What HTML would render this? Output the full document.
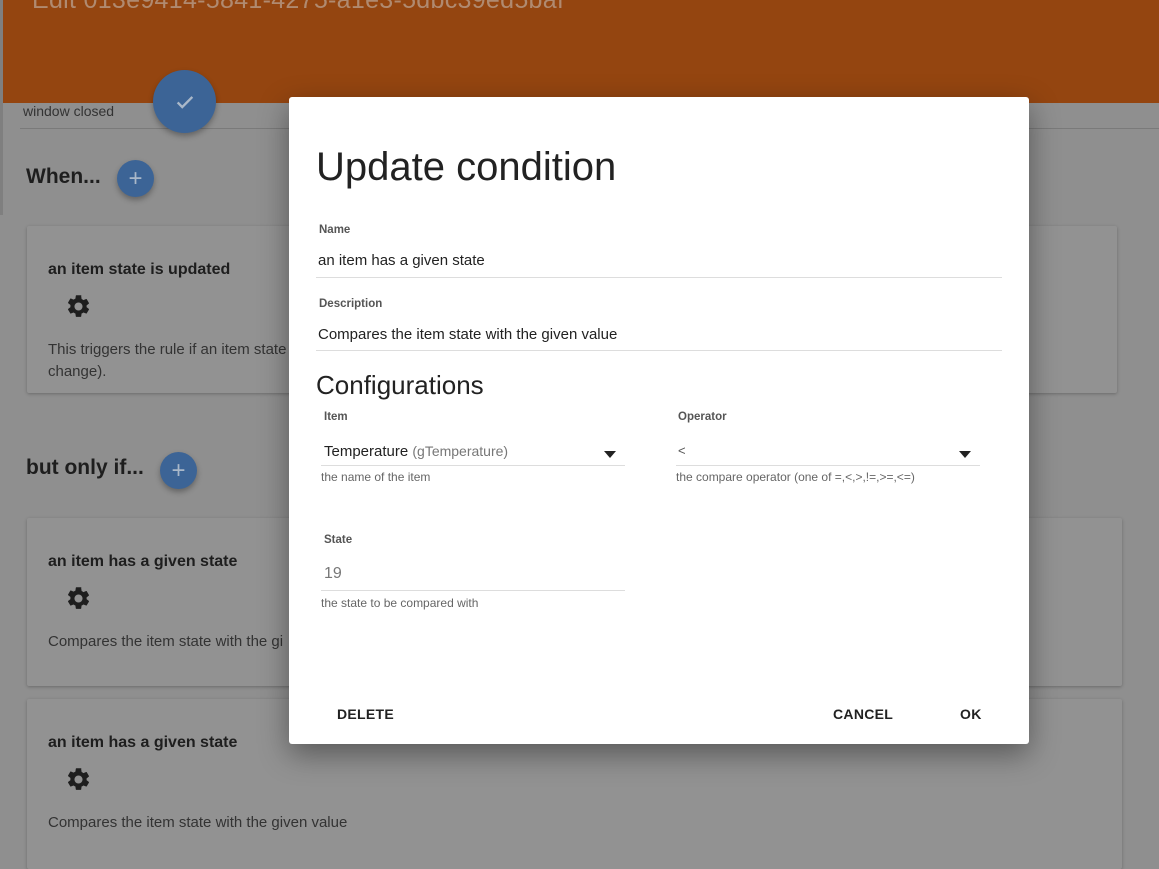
<!DOCTYPE html>
<html><head><meta charset="utf-8"><style>
*{box-sizing:border-box;margin:0;padding:0}
body{width:1159px;height:858px;overflow:hidden;background:#8f8f8f;font-family:"Liberation Sans",sans-serif;position:relative;color:#1a1a1a}
.hdr{position:absolute;left:3px;top:0;width:1156px;height:103px;background:#944510}
.hdr h1{position:absolute;left:29px;top:-14px;font-weight:300;font-size:25px;color:#b08a70;letter-spacing:.3px}
.strip{position:absolute;left:0;top:0;width:3px;height:215px;background:#7f7f7f}
.wc{position:absolute;left:23px;top:103px;font-size:14px;color:#333}
.line{position:absolute;left:20px;top:128px;width:1139px;height:1px;background:#7a7a7a}
.fab{position:absolute;border-radius:50%;background:#3c6496;box-shadow:0 3px 6px rgba(0,0,0,.3);color:#aab8c9;display:flex;align-items:center;justify-content:center}
.h2{position:absolute;font-size:21px;font-weight:bold;color:#1e1e1e}
.card{position:absolute;background:#929292;box-shadow:0 1px 3px rgba(0,0,0,.25);border-radius:2px}
.card .t{position:absolute;left:21px;top:35px;font-size:16px;color:#1e1e1e;font-weight:bold}
.card .g{position:absolute;left:38px;top:67px}
.card .d{position:absolute;left:21px;top:113px;font-size:15px;color:#333;line-height:22px}
.dlg{position:absolute;left:289px;top:97px;width:740px;height:647px;background:#fff;border-radius:3px;box-shadow:0 10px 30px rgba(0,0,0,.4)}
.dlg .ttl{position:absolute;left:27px;top:48px;font-size:40px;font-weight:300;color:#222}
.lbl{position:absolute;font-size:11.5px;font-weight:bold;color:#555}
.val{position:absolute;font-size:15px;color:#222}
.ul{position:absolute;height:1px;background:#ddd}
.hint{position:absolute;font-size:12px;color:#666}
.arr{position:absolute;width:0;height:0;border-left:6px solid transparent;border-right:6px solid transparent;border-top:7px solid #222}
.btn{position:absolute;top:609px;font-size:14px;font-weight:bold;color:#222;letter-spacing:.3px}
</style></head><body>
<div class="hdr"><h1>Edit 013e9414-5841-4275-a1e3-5dbc39ed5baf</h1></div>
<div class="strip"></div>
<div class="wc">window closed</div>
<div class="line"></div>
<div class="fab" style="left:153px;top:70px;width:63px;height:63px"><svg width="22" height="22" viewBox="0 0 24 24"><path d="M4 12.5l5 5L20 6.5" fill="none" stroke="#aab8c9" stroke-width="2.6"/></svg></div>
<div class="h2" style="left:26px;top:165px">When...</div>
<div class="fab" style="left:117px;top:160px;width:37px;height:37px;font-size:24px;font-weight:300">+</div>
<div class="h2" style="left:26px;top:456px">but only if...</div>
<div class="fab" style="left:160px;top:452px;width:37px;height:37px;font-size:24px;font-weight:300">+</div>

<div class="card" style="left:27px;top:226px;width:1090px;height:167px"><div class="t">an item state is updated</div><div class="g"><svg width="27" height="27" viewBox="0 0 24 24"><path fill="#1e1e1e" d="M19.14 12.94c.04-.3.06-.61.06-.94s-.02-.64-.07-.94l2.03-1.58a.49.49 0 0 0 .12-.61l-1.92-3.32a.49.49 0 0 0-.59-.22l-2.39.96c-.5-.38-1.03-.7-1.62-.94l-.36-2.54A.48.48 0 0 0 13.920 2h-3.84c-.24 0-.43.17-.47.41l-.36 2.54c-.59.24-1.13.57-1.62.94l-2.39-.96a.48.48 0 0 0-.59.22L2.74 8.47c-.12.21-.08.47.12.61l2.03 1.58c-.05.3-.09.63-.09.94s.02.64.07.94l-2.03 1.58a.49.49 0 0 0-.12.61l1.92 3.32c.12.22.37.29.59.22l2.39-.96c.5.38 1.03.7 1.62.94l.36 2.54c.05.24.24.41.48.41h3.84c.24 0 .44-.17.47-.41l.36-2.54c.59-.24 1.13-.56 1.62-.94l2.39.96c.22.08.47 0 .59-.22l1.92-3.32c.12-.22.07-.47-.12-.61l-2.01-1.58zM12 15.6A3.6 3.6 0 1 1 12 8.4a3.6 3.6 0 0 1 0 7.2z"/></svg></div><div class="d">This triggers the rule if an item state<br>change).</div></div>
<div class="card" style="left:27px;top:518px;width:1095px;height:168px"><div class="t">an item has a given state</div><div class="g"><svg width="27" height="27" viewBox="0 0 24 24"><path fill="#1e1e1e" d="M19.14 12.94c.04-.3.06-.61.06-.94s-.02-.64-.07-.94l2.03-1.58a.49.49 0 0 0 .12-.61l-1.92-3.32a.49.49 0 0 0-.59-.22l-2.39.96c-.5-.38-1.03-.7-1.62-.94l-.36-2.54A.48.48 0 0 0 13.92 2h-3.84c-.24 0-.43.17-.47.41l-.36 2.54c-.59.24-1.13.57-1.62.94l-2.39-.96a.48.48 0 0 0-.59.22L2.74 8.47c-.12.21-.08.47.12.61l2.03 1.58c-.05.3-.09.63-.09.94s.02.64.07.94l-2.03 1.58a.49.49 0 0 0-.12.61l1.92 3.32c.12.22.37.29.59.22l2.39-.96c.5.38 1.03.7 1.62.94l.36 2.54c.05.24.24.41.48.41h3.84c.24 0 .44-.17.47-.41l.36-2.54c.59-.24 1.13-.56 1.62-.94l2.39.96c.22.08.47 0 .59-.22l1.92-3.32c.12-.22.07-.47-.12-.61l-2.01-1.58zM12 15.6A3.6 3.6 0 1 1 12 8.4a3.6 3.6 0 0 1 0 7.2z"/></svg></div><div class="d">Compares the item state with the gi</div></div>
<div class="card" style="left:27px;top:699px;width:1095px;height:170px"><div class="t">an item has a given state</div><div class="g"><svg width="27" height="27" viewBox="0 0 24 24"><path fill="#1e1e1e" d="M19.14 12.94c.04-.3.06-.61.06-.94s-.02-.64-.07-.94l2.03-1.58a.49.49 0 0 0 .12-.61l-1.92-3.32a.49.49 0 0 0-.59-.22l-2.39.96c-.5-.38-1.03-.7-1.62-.94l-.36-2.54A.48.48 0 0 0 13.92 2h-3.84c-.24 0-.43.17-.47.41l-.36 2.54c-.59.24-1.13.57-1.62.94l-2.39-.96a.48.48 0 0 0-.59.22L2.74 8.47c-.12.21-.08.47.12.61l2.03 1.58c-.05.3-.09.63-.09.94s.02.64.07.94l-2.03 1.58a.49.49 0 0 0-.12.61l1.92 3.32c.12.22.37.29.59.22l2.39-.96c.5.38 1.03.7 1.62.94l.36 2.54c.05.24.24.41.48.41h3.84c.24 0 .44-.17.47-.41l.36-2.54c.59-.24 1.13-.56 1.62-.94l2.39.96c.22.08.47 0 .59-.22l1.92-3.32c.12-.22.07-.47-.12-.61l-2.01-1.58zM12 15.6A3.6 3.6 0 1 1 12 8.4a3.6 3.6 0 0 1 0 7.2z"/></svg></div><div class="d">Compares the item state with the given value</div></div>

<div class="dlg">
<div class="ttl">Update condition</div>
<div class="lbl" style="left:30px;top:127px">Name</div>
<div class="val" style="left:29px;top:155px">an item has a given state</div>
<div class="ul" style="left:27px;top:180px;width:686px"></div>
<div class="lbl" style="left:30px;top:201px">Description</div>
<div class="val" style="left:29px;top:229px">Compares the item state with the given value</div>
<div class="ul" style="left:27px;top:253px;width:686px"></div>
<div style="position:absolute;left:27px;top:273px;font-size:26px;font-weight:300;color:#222">Configurations</div>
<div class="lbl" style="left:35px;top:314px">Item</div>
<div class="val" style="left:35px;top:346px">Temperature <span style="color:#777;font-size:14px">(gTemperature)</span></div>
<div class="arr" style="left:315px;top:354px"></div>
<div class="ul" style="left:32px;top:368px;width:304px"></div>
<div class="hint" style="left:32px;top:373px">the name of the item</div>
<div class="lbl" style="left:389px;top:314px">Operator</div>
<div class="val" style="left:389px;top:346px;font-size:13px;color:#555">&lt;</div>
<div class="arr" style="left:670px;top:354px"></div>
<div class="ul" style="left:387px;top:368px;width:304px"></div>
<div class="hint" style="left:387px;top:373px">the compare operator (one of =,&lt;,&gt;,!=,&gt;=,&lt;=)</div>
<div class="lbl" style="left:35px;top:437px">State</div>
<div class="val" style="left:35px;top:468px;color:#777;font-size:16px">19</div>
<div class="ul" style="left:32px;top:493px;width:304px"></div>
<div class="hint" style="left:32px;top:499px">the state to be compared with</div>
<div class="btn" style="left:48px">DELETE</div>
<div class="btn" style="left:544px">CANCEL</div>
<div class="btn" style="left:671px">OK</div>
</div>
</body></html>
